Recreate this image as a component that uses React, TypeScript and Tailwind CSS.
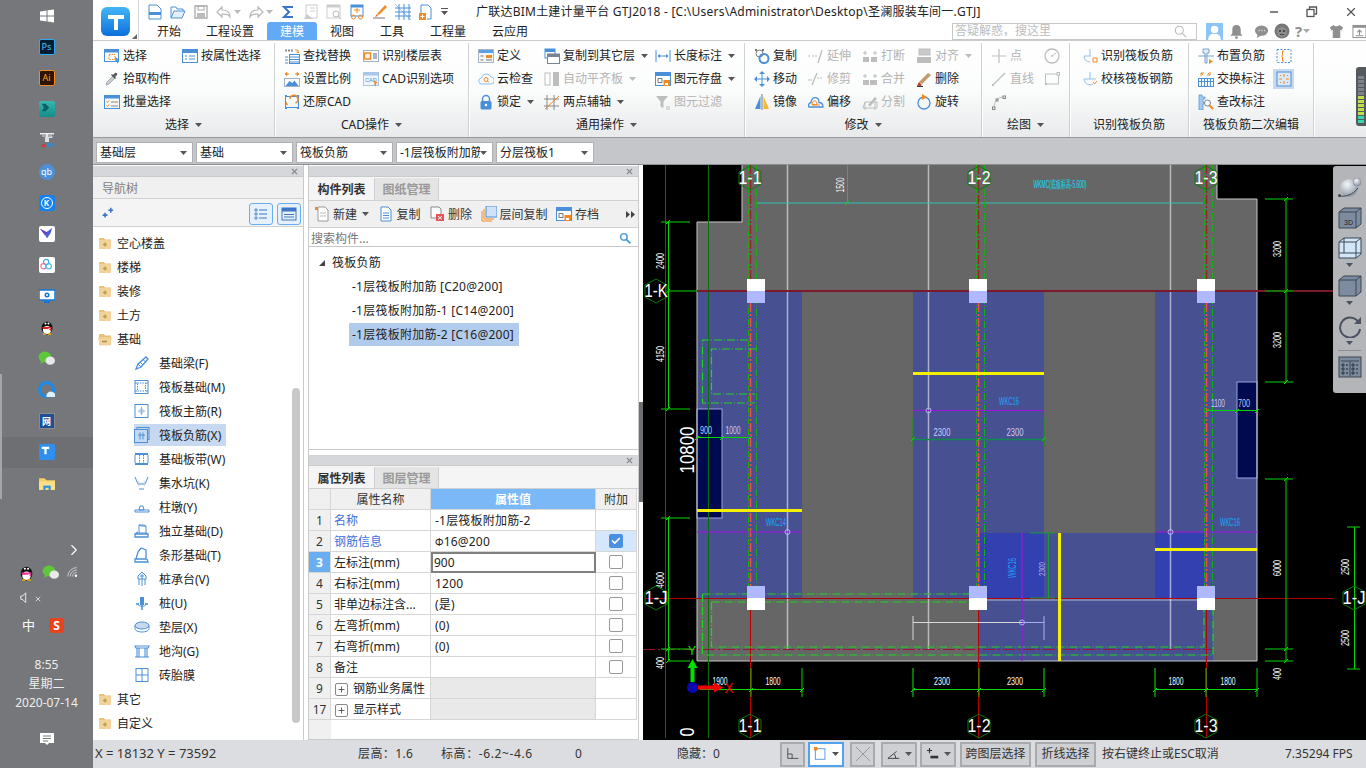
import type { ReactNode } from 'react';
import { X as CloseIcon, Check, ChevronRight, Minus, Plus } from 'lucide-react';

const B = '#4a90d9';
const O = '#f08a24';
const G = '#bdbdbd';

const Svg = ({ children, size = 16, box = 16 }: { children: ReactNode; size?: number; box?: number }) => (
  <svg width={size} height={size} viewBox={`0 0 ${box} ${box}`} fill="none" className="shrink-0">
    {children}
  </svg>
);

const Caret = ({ color = '#555' }: { color?: string }) => (
  <svg width="7" height="4" viewBox="0 0 7 4" className="shrink-0">
    <path d="M0 0h7L3.5 4z" fill={color} />
  </svg>
);

// ribbon icons
const icons: Record<string, ReactNode> = {
  select: (<><rect x=".5" y="1.5" width="14" height="12" stroke={B} /><rect x="1" y="2" width="13" height="2.5" fill={B} /><rect x="5" y="6.5" width="6" height="5" stroke={O} strokeDasharray="1.5 1" /><path d="M11 9l4.5 3-2 .5 1 2.5-1 .5-1-2.5-1 1z" fill={B} /></>),
  propSel: (<><rect x=".5" y="1.5" width="15" height="13" stroke={B} /><rect x="1" y="2" width="14" height="3" fill={B} /><path d="M3 8h2M3 11h2M7 8h6M7 11h6" stroke={B} /></>),
  picker: (<><path d="M2 14l1-3 6-6 2 2-6 6z" fill="#c8cdd2" stroke="#8b939b" strokeWidth=".7" /><path d="M9 4l2-2c1-1 3 1 2 2l-2 2 1 1-1 1-4-4 1-1z" fill="#50565c" /></>),
  batch: (<><rect x=".5" y="1.5" width="15" height="13" stroke={B} /><rect x="1" y="2" width="14" height="2.5" fill={B} /><path d="M2.5 7.5l1 1 1.5-2M2.5 11.5l1 1 1.5-2" stroke={O} /><path d="M7 8h7M7 12h7" stroke="#888" /></>),
  find: (<><path d="M1 2.5h2M4 2.5h2M7 2.5h2" stroke="#8a8a8a" strokeWidth="2" /><path d="M11 2h3v3M14 5l-1.5-1M14 5l1-1" stroke={O} /><rect x="5.5" y="6.5" width="10" height="9" stroke={B} /><path d="M6 9h9M6 11.5h9M6 14h9M1 9h3M1 12h3M1 15h3" stroke={B} /></>),
  floor: (<><rect x=".5" y="2.5" width="15" height="11" stroke="#9fb3c8" /><rect x="1.5" y="5" width="6" height="6" fill="#f4f4f4" stroke={O} strokeWidth="1.5" /><path d="M10 6h4M10 8h4M10 10h4" stroke="#4d6f96" /></>),
  scale: (<><path d="M2 3h3M1 3l2-1.5v3zM14 3h-3M15 3l-2-1.5v3z" fill={O} stroke={O} /><rect x=".5" y="7.5" width="15" height="8" stroke="#9fb3c8" /><path d="M1.5 15l4-5 3 2 2-2.5 4 5.500z" fill={B} /></>),
  cadOpt: (<><rect x=".5" y="1.5" width="15" height="13" stroke="#a8c7e8" fill="#eef5fc" /><rect x="1" y="2" width="14" height="2.5" fill="#a8c7e8" /><text x="2" y="11" fontSize="5.500" fill={B} fontFamily="Liberation Sans">CAD</text><path d="M11 9l4 3-2 .5v3l-1.500-1z" fill={O} /></>),
  restore: (<><rect x="1.500" y="2.500" width="13" height="11" stroke={B} /><path d="M1 1h2v2H1zM13 1h2v2h-2zM1 13h2v2H1zM13 13h2v2h-2z" fill={B} /><path d="M11.500 9a4 4 0 1 0-5.500-4" stroke={O} strokeWidth="1.500" /><path d="M4 11l2 2.500 2-2.500z" fill={O} transform="rotate(60 6 8)" /></>),
  define: (<><rect x=".5" y="1.500" width="15" height="13" stroke="#a7b5c4" fill="#f5f6f7" /><rect x="1" y="2" width="14" height="3" fill="#5b9fe6" /><rect x="8" y="7" width="6" height="3" fill={O} /><path d="M2.500 8h3M2.500 12h3M8 12h6" stroke="#777" /></>),
  cloud: (<><path d="M4 13a3 3 0 0 1-.500-6 5 5 0 0 1 9.500-1 3.500 3.500 0 0 1-.500 7z" stroke="#8cc0ee" /><circle cx="8" cy="8.500" r="2" stroke={O} /><path d="M9.500 10l1.500 1.500" stroke={O} /></>),
  lock: (<><path d="M4.500 7V5a3.500 3.500 0 0 1 7 0v2" stroke={B} strokeWidth="1.500" /><rect x="2.500" y="7" width="11" height="8.500" rx="1.500" fill={B} /><circle cx="8" cy="11" r="1.200" fill="#fff" /></>),
  copyLayer: (<><rect x="1" y="1" width="10" height="9" stroke={B} /><rect x="1" y="1" width="10" height="3" fill={B} /><rect x="3.500" y="6" width="12" height="9.500" fill="#fff" stroke="#7a8490" /><rect x="3.500" y="6" width="12" height="3" fill="#7a8490" /></>),
  autoAlign: (<><rect x="1" y="2" width="5" height="12" stroke={G} /><rect x="9" y="1" width="6" height="14" fill={G} /></>),
  twoPoint: (<><path d="M3 1v15M10 1v15M0 5h15M0 12h15" stroke="#8a8a8a" /><path d="M1 15L15 2" stroke={O} /></>),
  length: (<><path d="M1 2v12M15 2v12M3 8h10" stroke={B} /><path d="M2.500 8L5 6v4zM13.500 8L11 6v4z" fill={B} /></>),
  save: (<><rect x=".5" y="1.500" width="15" height="13" stroke={B} fill="#fff" /><rect x="1" y="2" width="14" height="3" fill={B} /><path d="M3 7.500h4v4H3z" stroke="#777" /><rect x="8.500" y="9" width="6.500" height="6" fill={O} /><rect x="10" y="12" width="3" height="2" fill="#fff" /></>),
  filter: (<><path d="M1 2h12L8.500 7.500V14l-3-1.500v-5z" fill={G} /><path d="M11 13h4M11 15h4" stroke={G} /></>),
  copy: (<><rect x="1" y="1" width="2" height="2" fill="#777" /><rect x="8" y="1" width="2" height="2" fill="#777" /><circle cx="5.500" cy="5.500" r="3.500" stroke="#777" /><circle cx="10" cy="10.500" r="4.500" stroke={B} strokeWidth="2" /></>),
  extend: (<><path d="M0 8h2M4 8h2M7 8h2" stroke={G} /><path d="M10 15l4-13" stroke={G} strokeWidth="1.300" /></>),
  move: (<><path d="M8 2v12M2 8h12" stroke={B} /><path d="M8 0l3 3H5zM8 16l3-3H5zM0 8l3-3v6zM16 8l-3-3v6z" fill={B} /></>),
  trim: (<><path d="M0 9h4M9 7h2M12 7h2" stroke={G} /><path d="M4 14L9 2" stroke={G} strokeWidth="1.300" /></>),
  mirror: (<><path d="M6.500 2L1 15h5.500z" fill={B} /><path d="M8 0v16" stroke="#777" /><path d="M9.500 2L15 15H9.500z" fill="#f5b82e" /></>),
  offset: (<><path d="M1 13a3 3 0 0 1 2-4.500C3 2 11 2 11 8.500c2 0 4 1.500 4 4.500z" stroke={B} strokeWidth="1.300" /><path d="M4 10.500c0-5 5-5 5 0z M4 11h8" stroke={O} /></>),
  breakI: (<><rect x="1" y="9" width="6" height="5" fill={G} /><rect x="9" y="9" width="6" height="5" fill={G} /><path d="M3 3v4M1 5h4M13 3v4M11 5h4" stroke={G} /></>),
  merge: (<><rect x="1" y="9" width="6" height="5" fill={G} /><rect x="8" y="9" width="7" height="5" fill={G} /><path d="M3 3v4M1 5h4M13 3v4M11 5h4" stroke={G} /></>),
  split: (<><path d="M1 14h14V8L3 8zM3 8v8M13 8v8" stroke={G} /><path d="M6 11l7-8 2 1.500-7 8z" fill={G} /></>),
  align: (<><rect x="3" y="1" width="11" height="6" fill="#c9c9c9" stroke={G} /><rect x="1" y="9" width="14" height="6" fill={G} /></>),
  erase: (<><path d="M3 11l9-9 3 2-9 9z" fill="#c49a6c" /><path d="M3 11l3 3-2 1.500-3-1z" fill="#c1441e" /><path d="M1 15.500h6" stroke="#333" /></>),
  rotate: (<><circle cx="8" cy="9" r="6" stroke={B} strokeWidth="1.300" /><path d="M6 0l5 3-5 3z" fill={O} /></>),
  point: (<path d="M8 1v14M1 8h14" stroke={G} strokeWidth="1.200" />),
  circle: (<><circle cx="8" cy="8" r="7" stroke={G} strokeWidth="1.300" /><circle cx="8" cy="8" r="1" fill={G} /><path d="M8 8l4-3" stroke={G} /></>),
  line: (<><path d="M2 14L14 2" stroke={G} strokeWidth="1.200" /><rect x="1" y="13" width="2" height="2" fill={G} /></>),
  rect: (<><rect x="1.500" y="3" width="13" height="10" stroke={G} /><rect x="13" y="1.500" width="2.500" height="2.500" fill="#fff" stroke={G} /><rect x="1" y="12" width="2" height="2" fill={G} /></>),
  arc: (<><path d="M3 14C3 7 7 3 13 3" stroke={G} /><rect x="1.500" y="13" width="2.500" height="2.500" stroke="#888" /><rect x="12" y="2" width="2.500" height="2.500" stroke="#888" /><rect x="5" y="5" width="2" height="2" stroke="#888" /></>),
  recog: (<><path d="M8 1v7M2 8h7" stroke="#93bfe8" /><path d="M2 8a6 6 0 0 0 6 6" stroke="#93bfe8" /><path d="M11 10h4v4h-4z" stroke={O} /></>),
  check: (<><path d="M8 1v7M2 8h12" stroke="#93bfe8" /><path d="M2 8a6 6 0 0 0 9 5" stroke="#93bfe8" /><path d="M11 11l1.500 2 2.500-3" stroke={O} /></>),
  place: (<><path d="M5 1h6v4H9v10H7V5H5z" stroke="#7aa3cf" fill="#e6eff8" /><path d="M0 8h16" stroke="#7aa3cf" /><path d="M11 11l4 2.500-4 2.500z" fill={O} /></>),
  swap: (<><path d="M3 5V2h3M3 2l2 2M12 1v3H9M12 4l-2-2" stroke={O} /><rect x=".5" y="7.500" width="15" height="8" stroke={B} /><path d="M1 10.500h14M3.500 8v7M6.500 8v7M9.500 8v7M12.500 8v7" stroke={B} /></>),
  audit: (<><path d="M1 1h3v2h3v2H5v3h1v2H5v6H1z" fill="#a9c9ea" stroke={B} strokeWidth=".7" /><circle cx="9.500" cy="9" r="3" stroke="#7a8490" fill="#fff" /><path d="M11 11l4 4" stroke={O} strokeWidth="2" /></>),
  bracket: (<><rect x="1" y="1.500" width="14" height="13" stroke={B} strokeDasharray="2 1.500" /><path d="M8 3H6.500v4L5.500 8l1 1v4H8" stroke={O} /></>),
  target: (<><rect x="1" y="1" width="14" height="14" fill="#dbe8f6" stroke={B} /><path d="M8 3v3M8 10v3M3 8h3M10 8h3" stroke={O} /><path d="M4 4l1 1M12 4l-1 1M4 12l1-1M12 12l-1-1" stroke={O} /></>),
};

const Ic = ({ name }: { name: string }) => <Svg>{icons[name]}</Svg>;

type ItemDef = { icon: string; label?: string; caret?: boolean; off?: boolean };

const RibbonItem = ({ icon, label, caret, off }: ItemDef) => (
  <div className={`flex h-[23px] shrink-0 items-center gap-[3px] whitespace-nowrap text-[12px] ${off ? 'text-[#b4b4b4]' : 'text-[#222]'}`}>
    <Ic name={icon} />
    {label && <span>{label}</span>}
    {caret && <span className="ml-[3px]"><Caret color={off ? '#bbb' : '#555'} /></span>}
  </div>
);

const Group = ({
  w, pl, cols, label, caret = true,
}: { w: string; pl: string; cols: { w: string; items: ItemDef[] }[]; label: string; caret?: boolean }) => (
  <div className={`flex ${w} shrink-0 flex-col border-r border-[#cfd1d3] shadow-[1px_0_0_#fff]`}>
    <div className={`flex h-[70px] pt-px ${pl}`}>
      {cols.map((c, i) => (
        <div key={i} className={`flex ${c.w} shrink-0 flex-col`}>
          {c.items.map((it, j) => <RibbonItem key={j} {...it} />)}
        </div>
      ))}
    </div>
    <div className="flex h-[24px] items-center justify-center gap-[6px] text-[12px] text-[#222]">
      {label}
      {caret && <Caret />}
    </div>
  </div>
);

const groups = [
  { w: 'w-[182px]', pl: 'pl-[11px]', label: '选择', cols: [
    { w: 'w-[78px]', items: [{ icon: 'select', label: '选择' }, { icon: 'picker', label: '拾取构件' }, { icon: 'batch', label: '批量选择' }] },
    { w: 'w-[90px]', items: [{ icon: 'propSel', label: '按属性选择' }] },
  ] },
  { w: 'w-[194px]', pl: 'pl-[9px]', label: 'CAD操作', cols: [
    { w: 'w-[79px]', items: [{ icon: 'find', label: '查找替换' }, { icon: 'scale', label: '设置比例' }, { icon: 'restore', label: '还原CAD' }] },
    { w: 'w-[90px]', items: [{ icon: 'floor', label: '识别楼层表' }, { icon: 'cadOpt', label: 'CAD识别选项' }] },
  ] },
  { w: 'w-[276px]', pl: 'pl-[9px]', label: '通用操作', cols: [
    { w: 'w-[66px]', items: [{ icon: 'define', label: '定义' }, { icon: 'cloud', label: '云检查' }, { icon: 'lock', label: '锁定', caret: true }] },
    { w: 'w-[111px]', items: [{ icon: 'copyLayer', label: '复制到其它层', caret: true }, { icon: 'autoAlign', label: '自动平齐板', caret: true, off: true }, { icon: 'twoPoint', label: '两点辅轴', caret: true }] },
    { w: 'w-[85px]', items: [{ icon: 'length', label: '长度标注', caret: true }, { icon: 'save', label: '图元存盘', caret: true }, { icon: 'filter', label: '图元过滤', off: true }] },
  ] },
  { w: 'w-[237px]', pl: 'pl-[9px]', label: '修改', cols: [
    { w: 'w-[54px]', items: [{ icon: 'copy', label: '复制' }, { icon: 'move', label: '移动' }, { icon: 'mirror', label: '镜像' }] },
    { w: 'w-[54px]', items: [{ icon: 'extend', label: '延伸', off: true }, { icon: 'trim', label: '修剪', off: true }, { icon: 'offset', label: '偏移' }] },
    { w: 'w-[54px]', items: [{ icon: 'breakI', label: '打断', off: true }, { icon: 'merge', label: '合并', off: true }, { icon: 'split', label: '分割', off: true }] },
    { w: 'w-[60px]', items: [{ icon: 'align', label: '对齐', caret: true, off: true }, { icon: 'erase', label: '删除' }, { icon: 'rotate', label: '旋转' }] },
  ] },
  { w: 'w-[88px]', pl: 'pl-[9px]', label: '绘图', cols: [
    { w: 'w-[53px]', items: [{ icon: 'point', label: '点', off: true }, { icon: 'line', label: '直线', off: true }, { icon: 'arc' }] },
    { w: 'w-[20px]', items: [{ icon: 'circle' }, { icon: 'rect' }] },
  ] },
  { w: 'w-[119px]', pl: 'pl-[12px]', label: '识别筏板负筋', caret: false, cols: [
    { w: 'w-[100px]', items: [{ icon: 'recog', label: '识别筏板负筋' }, { icon: 'check', label: '校核筏板钢筋' }] },
  ] },
];

const HeaderTab = ({ label, active, w, pr = '' }: { label: string; active?: boolean; w: string; pr?: string }) => (
  <div className={`flex ${w} ${pr} h-[18px] items-center justify-center pt-[2px] text-[12px] ${active ? 'rounded-t-[3px] bg-[#62a9f6] text-white' : 'text-[#222]'}`}>
    {label}
  </div>
);

const QuickIcons = () => (
  <div className="flex items-center gap-[7px]">
    <Svg><path d="M2 1h8l4 4v10H2z" stroke={B} /><rect x="2" y="8" width="12" height="3" fill={B} /></Svg>
    <Svg><path d="M1 14V3h5l1 2h6v2" stroke={B} /><path d="M1 14l3-7h11l-3 7z" stroke={B} fill="#e4f0fb" /></Svg>
    <Svg><path d="M2 2h12v12H2z" stroke="#aaa" strokeWidth="1.300" /><rect x="5" y="2" width="6" height="4" stroke="#aaa" /><rect x="4" y="9" width="8" height="5" fill="#bbb" /></Svg>
    <span className="flex items-center gap-[2px]">
      <Svg><path d="M6 3L1 8l5 5v-3c4 0 6 0 8 3 0-5-3-7-8-7z" stroke="#b7b7b7" strokeWidth="1.200" /></Svg>
      <Caret color="#bbb" />
    </span>
    <span className="flex items-center gap-[2px]">
      <Svg><path d="M10 3l5 5-5 5v-3c-4 0-6 0-8 3 0-5 3-7 8-7z" stroke="#b7b7b7" strokeWidth="1.200" /></Svg>
      <Caret color="#bbb" />
    </span>
    <Svg><path d="M13 3H4l5 5-5 5h9" stroke="#3c76c4" strokeWidth="2" /></Svg>
    <Svg><rect x="3" y="1" width="11" height="13" stroke="#ccc" /><path d="M7 4h5M7 7h5" stroke="#ccc" /><path d="M1 15l3-5 6 5z" fill="#ccc" /></Svg>
    <Svg><rect x="1" y="1" width="13" height="13" stroke="#ccc" /><rect x="1" y="1" width="13" height="2.500" fill="#ccc" /><circle cx="10" cy="10" r="3" stroke="#bbb" /><path d="M12 12l3 3" stroke="#bbb" /></Svg>
    <Svg><rect x="2" y="1" width="12" height="11" stroke={B} /><rect x="2" y="1" width="12" height="2.500" fill={B} /><path d="M5 6h6M8 4v5" stroke={O} /><circle cx="4.500" cy="13" r="2" stroke={O} /><circle cx="11.500" cy="13" r="2" stroke={O} /></Svg>
    <Svg><path d="M5 10l8-9 2 2-8 8z" fill={O} /><path d="M1 14h12" stroke="#777" /><path d="M5 10l-2 3 3-1z" fill="#d96a12" /></Svg>
    <Svg><path d="M0 4h16M0 8h16M0 12h16M4 0v16M9 0v16M14 0v16" stroke={B} /><path d="M0 0l16 16" stroke={B} strokeWidth=".5" /></Svg>
    <Svg><path d="M3 9V1h7l3 3v11H9" stroke={B} /><rect x="1" y="9" width="7" height="7" fill={O} /><path d="M4.500 10.500v4M2.500 12.500h4" stroke="#fff" /></Svg>
    <span className="flex flex-col items-center gap-[2px]">
      <span className="h-px w-[7px] bg-[#555]" />
      <Caret />
    </span>
  </div>
);

const Header = () => (
  <div className="flex h-[41px] border-b border-[#c9cbcd] bg-white">
    <div className="relative flex w-[46px] shrink-0 justify-center border-r border-[#d4d4d4] pt-[7px]">
      <div className="flex h-[29px] w-[29px] items-center justify-center rounded-[6px] bg-gradient-to-b from-[#45b4f5] to-[#0b70dd]">
        <Svg size={22} box={22}><path d="M3 4h16v4h-6v11H9V8H3z" fill="#fff" /></Svg>
      </div>
      <span className="absolute bottom-[1px] right-[1px] h-0 w-0 border-b-[5px] border-l-[5px] border-b-[#666] border-l-transparent" />
    </div>
    <div className="flex flex-1 flex-col">
      <div className="flex h-[22px] items-center pl-[8px] pt-[1px]">
        <div className="w-[329px]"><QuickIcons /></div>
        <span className="w-[508px] whitespace-nowrap text-[12px] tracking-[0.23px] text-[#222]">广联达BIM土建计量平台 GTJ2018 - [C:\Users\Administrator\Desktop\圣澜服装车间一.GTJ]</span>
        <div className="ml-[284px] flex items-center gap-[26px] text-[#555]">
          <Minus size={12} strokeWidth={3} />
          <Svg size={12} box={12}><rect x="1" y="3.500" width="7" height="7" stroke="#555" strokeWidth="1.300" /><path d="M3.500 3V1h7v7h-2" stroke="#555" strokeWidth="1.300" /></Svg>
          <CloseIcon size={14} />
        </div>
      </div>
      <div className="flex items-center pl-[1px]">
        <HeaderTab label="开始" w="w-[58px]" />
        <HeaderTab label="工程设置" w="w-[69px]" pr="pr-[5px]" />
        <HeaderTab label="建模" active w="w-[50px]" />
        <HeaderTab label="视图" w="w-[50px]" />
        <HeaderTab label="工具" w="w-[50px]" />
        <HeaderTab label="工程量" w="w-[62px]" />
        <HeaderTab label="云应用" w="w-[62px]" />
        <div className="ml-[411px] flex h-[17px] w-[245px] items-center justify-between border border-[#c8c8c8] pl-[2px] pr-[9px] text-[12px] text-[#bdbdbd]">
          答疑解惑，搜这里
          <Svg size={13}><circle cx="6.500" cy="6.500" r="5" stroke="#bbb" strokeWidth="1.300" /><path d="M10 10l5 5" stroke="#bbb" strokeWidth="1.500" /></Svg>
        </div>
        <div className="ml-[9px] flex items-center">
          <Svg size={17}><rect width="16" height="16" fill="#8cc4f5" /><circle cx="8" cy="6" r="3.500" fill="#fff" /><path d="M2 16c0-5 3-6 6-6s6 1 6 6z" fill="#fff" /></Svg>
          <span className="ml-[6px]"><Svg size={15}><path d="M8 1c3 0 4.500 2 4.500 5v4l2 2.500h-13l2-2.500V6C3.500 3 5 1 8 1z" fill="#8f8f8f" /><circle cx="8" cy="14.500" r="1.500" fill="#8f8f8f" /></Svg></span>
          <span className="ml-[10px]"><Svg size={15}><ellipse cx="8" cy="7" rx="7" ry="5.500" fill="#8f8f8f" /><path d="M4 11l-1 4 5-3z" fill="#8f8f8f" /><path d="M5 7h.8M8 7h.8M11 7h.8" stroke="#fff" strokeWidth="1.500" /></Svg></span>
          <span className="ml-[5px]"><Svg size={16}><circle cx="8" cy="8" r="7.500" fill="#777" /><circle cx="8" cy="9" r="5" fill="#8d8d8d" /><circle cx="6" cy="8" r="1" fill="#333" /><circle cx="10" cy="8" r="1" fill="#333" /><path d="M6 11.500h4" stroke="#444" /></Svg></span>
          <span className="ml-[5px] text-[15px] font-bold leading-none text-[#8f8f8f]">?</span>
          <span className="ml-[1px]"><Caret color="#aaa" /></span>
          <span className="ml-[19px]"><Svg size={15}><path d="M5 1L1 3.500l1.500 3.500L4 6v9h8V6l1.500 1L15 3.500 11 1c-1 2-5 2-6 0z" fill="#8f8f8f" /></Svg></span>
          <span className="ml-[8px]"><Svg size={15}><rect x="1" y="1.500" width="14" height="13" stroke="#8f8f8f" /><rect x="1" y="1.500" width="14" height="2.500" fill="#8f8f8f" /><path d="M8 12V7M5.500 9L8 6.500 10.500 9" stroke="#8f8f8f" strokeWidth="1.200" /><path d="M4 12.500h8" stroke="#8f8f8f" /></Svg></span>
        </div>
      </div>
    </div>
  </div>
);

const Ribbon = () => (
  <div className="flex h-[97px] border-b border-[#98999b] bg-gradient-to-b from-white via-[#fbfcfc] to-[#e8eaeb] pt-[2px]">
    {groups.map((g) => <Group key={g.label} {...g} />)}
    <div className="flex w-[125px] shrink-0 flex-col border-r border-[#cfd1d3] shadow-[1px_0_0_#fff]">
      <div className="flex h-[70px] pl-[9px] pt-px">
        <div className="flex w-[75px] shrink-0 flex-col">
          <RibbonItem icon="place" label="布置负筋" />
          <RibbonItem icon="swap" label="交换标注" />
          <RibbonItem icon="audit" label="查改标注" />
        </div>
        <div className="flex flex-col">
          <div className="flex h-[23px] w-[21px] items-center justify-center"><Ic name="bracket" /></div>
          <div className="mt-[2px] flex h-[20px] w-[21px] items-center justify-center bg-[#c8d9ee]"><Ic name="target" /></div>
        </div>
      </div>
      <div className="flex h-[24px] items-center justify-center text-[12px] text-[#222]">筏板负筋二次编辑</div>
    </div>
    <div className="flex flex-1 justify-end pt-[24px]">
      <div className="flex h-[59px] w-[10px] flex-col-reverse gap-[1px] rounded-l-[3px] bg-[#555a5e] px-[2px] py-[3px]">
        {[0, 1, 2, 3, 4, 5, 6, 7, 8, 9, 10, 11].map((i) => (
          <span key={i} className={`h-[3px] ${i < 2 ? 'bg-[#39d6b0]' : i < 7 ? 'bg-[#bde04a]' : 'bg-[#7d8388]'}`} />
        ))}
      </div>
    </div>
  </div>
);

const SelectorBox = ({ label, w = 'w-[97px]' }: { label: string; w?: string }) => (
  <div className={`flex h-[21px] ${w} items-center justify-between border border-[#b0b1b3] bg-white pl-[3px] pr-[5px] text-[12px] text-[#222]`}>
    <span className="overflow-hidden whitespace-nowrap">{label}</span>
    <Caret />
  </div>
);

const SelectorBar = () => (
  <div className="flex h-[27px] items-start gap-[3px] border-b border-[#8d8e90] bg-[#c4c6c9] pl-[3px] pt-[4px]">
    <SelectorBox label="基础层" />
    <SelectorBox label="基础" />
    <SelectorBox label="筏板负筋" />
    <SelectorBox label="-1层筏板附加筋" />
    <SelectorBox label="分层筏板1" w="w-[98px]" />
  </div>
);

const PanelBar = () => (
  <div className="flex h-[11px] items-center justify-end border-b border-[#c9cacc] bg-[#d6d7da] pr-[4px]">
    <CloseIcon size={9} strokeWidth={3} className="text-[#888]" />
  </div>
);

const Folder = ({ open }: { open?: boolean }) => (
  <Svg size={16}>
    <path d="M2 3h5l1 1.500h6V14H2z" fill="#e9c27a" />
    {open
      ? <><path d="M1 6.500h11l3 0-2 8H3z" fill="#f0d49b" /><path d="M5 10.500h5" stroke="#b08c44" strokeWidth="1.500" /></>
      : <><rect x="2" y="5" width="12" height="9" fill="#f0d49b" /><path d="M6 9.500h4M8 7.500v4" stroke="#c59a48" strokeWidth="1.500" /></>}
  </Svg>
);

const navIcons: Record<string, ReactNode> = {
  beam: (<><path d="M2 14l2-5 8-7 2 2-7 8z" stroke={B} strokeWidth="1.300" /><path d="M4 9l3 3M6 7l3 3M9 4.500l3 3" stroke={B} /></>),
  raft: (<><rect x="1" y="1.500" width="13" height="13" stroke={B} /><rect x="3.500" y="4" width="8" height="8" stroke={B} strokeDasharray="1.500 1" /><path d="M1 4h2M12 4h2M1 12h2M12 12h2" stroke={B} /></>),
  main: (<><rect x="1" y="1.500" width="13" height="13" stroke={B} /><path d="M7.500 4v8M4 8h7" stroke="#8fb2d8" /><path d="M6 6h3v4H6z" stroke="#8fb2d8" strokeWidth=".6" /></>),
  neg: (<><rect x="3" y="0.500" width="12" height="12" stroke={B} /><rect x=".5" y="2.500" width="13" height="13" fill="#c7d9f0" stroke={B} /><path d="M4 8h7M6 5.500v7M9 5.500v7" stroke={B} /></>),
  strip: (<><rect x="1" y="2" width="13" height="2" fill={B} /><rect x="1" y="12" width="13" height="2" fill={B} /><path d="M5.500 4v8M9.500 4v8" stroke={B} strokeDasharray="1.500 1" /><path d="M1 4v8M14 4v8" stroke={B} /></>),
  pit: (<><path d="M1 2l3 7h7l3-7M5 14h5" stroke={B} /><path d="M4 6l7 5" stroke={G} strokeDasharray="1 1" /><path d="M11 6l-7 5" stroke={G} strokeDasharray="1 1" /></>),
  pier: (<><path d="M1 11h14v2H1zM5 11l1-4h3l1 4z" stroke={B} fill="#fff" /></>),
  pad: (<><path d="M5 2h5l2 1v7H5zM5 2l2 1h5" stroke={B} /><path d="M1 11h13v3H1z M1 11l3-2M14 11l-2-1" stroke={B} strokeWidth="1.300" /></>),
  stripF: (<><path d="M7 1l5 2v9H1v3h13l-1-3M2 12l2-7 3-4" stroke={B} strokeWidth="1.300" /></>),
  cap: (<><path d="M8 1l4 4v3H4V5zM5 8v6M8 8v7M11 8v6" stroke={B} /><path d="M6 5h4M8 3v5" stroke={B} /></>),
  pile: (<><path d="M6 2h4v8H6z" fill={B} /><path d="M2 9h3M11 9h3M8 10v5" stroke={B} strokeWidth="1.500" /><path d="M4 9c0 3 8 3 8 0" stroke={B} /></>),
  cushion: (<><ellipse cx="8" cy="6.500" rx="7" ry="3.500" fill="#c7d9f0" stroke={B} /><path d="M1 6.500v3c0 2 3 3.500 7 3.500s7-1.500 7-3.500v-3" stroke={B} /></>),
  ditch: (<><path d="M1 3h14l-1 2H2zM3 5v9M13 5v9M1 14h14M5 5v9M11 5v9" stroke={B} strokeWidth="1.100" /></>),
  brick: (<><rect x="2" y="1.500" width="12" height="13" stroke={B} /><path d="M8 1.500v13M2 8h12" stroke={B} /></>),
};

const treeChildren = [
  { i: 'beam', t: '基础梁(F)' }, { i: 'raft', t: '筏板基础(M)' }, { i: 'main', t: '筏板主筋(R)' },
  { i: 'neg', t: '筏板负筋(X)', sel: true }, { i: 'strip', t: '基础板带(W)' }, { i: 'pit', t: '集水坑(K)' },
  { i: 'pier', t: '柱墩(Y)' }, { i: 'pad', t: '独立基础(D)' }, { i: 'stripF', t: '条形基础(T)' },
  { i: 'cap', t: '桩承台(V)' }, { i: 'pile', t: '桩(U)' }, { i: 'cushion', t: '垫层(X)' },
  { i: 'ditch', t: '地沟(G)' }, { i: 'brick', t: '砖胎膜' },
];

const TreeFolder = ({ t, open }: { t: string; open?: boolean }) => (
  <div className="flex h-[24px] items-center pl-[4px] text-[12px] text-[#222]">
    <Folder open={open} />
    <span className="ml-[4px] pt-[2px]">{t}</span>
  </div>
);

const NavPanel = () => (
  <div className="relative flex w-[211px] shrink-0 flex-col border-r border-[#c9cacc] bg-white">
    <div className="pt-[1px]"><PanelBar /></div>
    <div className="flex h-[22px] items-center border-b border-[#cfd0d2] bg-[#f0f0f0] pl-[9px] pt-[2px] text-[12px] text-[#7f7f7f]">导航树</div>
    <div className="flex h-[28px] items-center justify-between border-b border-[#cfd0d2] bg-[#f4f4f4] pl-[8px] pr-[2px] pt-[2px]">
      <Svg size={13}><path d="M2 10h6M5 7v6M9 4h6M12 1v6" stroke="#3c76c4" strokeWidth="2" /></Svg>
      <div className="flex gap-[4px]">
        <div className="flex h-[22px] w-[24px] items-center justify-center rounded-[3px] border border-[#66aef0] bg-[#e6f1fc]">
          <Svg><path d="M2 3h2v2H2zM2 7h2v2H2zM2 11h2v2H2z" stroke="#3c76c4" strokeWidth=".8" /><path d="M6 4h8M6 8h8M6 12h8" stroke="#3c76c4" /></Svg>
        </div>
        <div className="flex h-[22px] w-[24px] items-center justify-center rounded-[3px] border border-[#66aef0] bg-[#e6f1fc]">
          <Svg><rect x="1" y="2" width="14" height="12" stroke="#3c76c4" /><rect x="1" y="2" width="14" height="3.500" fill="#3c76c4" /><path d="M3 8.500h10M3 11h10" stroke="#3c76c4" /></Svg>
        </div>
      </div>
    </div>
    <div className="pt-[4px]">
      <TreeFolder t="空心楼盖" />
      <TreeFolder t="楼梯" />
      <TreeFolder t="装修" />
      <TreeFolder t="土方" />
      <TreeFolder t="基础" open />
      {treeChildren.map((c) => (
        <div key={c.t} className="flex h-[24px] items-center pl-[41px]">
          <div className={`flex h-[22px] items-center pr-[5px] text-[12px] text-[#222] ${c.sel ? 'bg-[#c7d9f0]' : ''}`}>
            <Svg size={16}>{navIcons[c.i]}</Svg>
            <span className="ml-[9px] pt-[2px]">{c.t}</span>
          </div>
        </div>
      ))}
      <TreeFolder t="其它" />
      <TreeFolder t="自定义" />
    </div>
    <div className="absolute left-[199px] top-[223px] h-[335px] w-[8px] rounded-full bg-[#c8c8c8]" />
  </div>
);

const ToolBtn = ({ icon, label, caret }: { icon: ReactNode; label: string; caret?: boolean }) => (
  <div className="flex items-center gap-[3px] whitespace-nowrap text-[12px] text-[#333]">
    <Svg>{icon}</Svg>
    <span className="pt-[2px]">{label}</span>
    {caret && <span className="ml-[2px]"><Caret /></span>}
  </div>
);

const PanelTabs = ({ a, b, h }: { a: string; b: string; h: string }) => (
  <div className={`flex ${h} border-b border-[#cfd0d2] bg-[#f5f5f5] pt-px text-[12px]`}>
    <div className="flex w-[65px] items-center justify-center pt-[2px] font-bold text-[#333]">{a}</div>
    <div className="flex w-[65px] items-center justify-center border-x border-[#cfd0d2] bg-[#e4e4e4] pt-[2px] font-bold text-[#999]">{b}</div>
  </div>
);

const ListPanel = () => (
  <div className="flex h-[285px] flex-col border-x border-b border-[#c9cacc] bg-white">
    <div className="pt-px"><PanelBar /></div>
    <PanelTabs a="构件列表" b="图纸管理" h="h-[24px]" />
    <div className="flex h-[27px] items-center border-b border-[#cfd0d2] bg-[#f0f0f0] pl-[5px] pr-[3px]">
      <div className="flex items-center gap-[8.5px]">
        <ToolBtn label="新建" caret icon={<><path d="M4 1h7l3 3v11H4z" stroke="#9a9a9a" fill="#fff" /><path d="M1 1h3v3H1z" fill={O} /><path d="M6 7h6M6 10h6" stroke="#bbb" /></>} />
        <ToolBtn label="复制" icon={<><path d="M3 1h7l3 3v11H3z" stroke={B} fill="#fff" /><path d="M5 7h6M5 9.500h6M5 12h6" stroke={B} /></>} />
        <ToolBtn label="删除" icon={<><path d="M2 1h8l2 2v9H2z" stroke="#888" fill="#fff" /><rect x="7" y="8" width="8" height="7" fill="#e05656" /><path d="M9 10l4 3.500M13 10l-4 3.500" stroke="#fff" /></>} />
        <ToolBtn label="层间复制" icon={<><path d="M1 5v10h10M3 3v10h10" stroke={O} /><rect x="5" y="0" width="11" height="11" fill="#cfe2f7" stroke={B} /></>} />
        <ToolBtn label="存档" icon={icons.save} />
      </div>
      <div className="ml-auto flex">
        <svg width="9" height="7" viewBox="0 0 9 7"><path d="M0 0l4 3.500L0 7zM5 0l4 3.500L5 7z" fill="#444" /></svg>
      </div>
    </div>
    <div className="flex h-[19px] items-center justify-between border-b border-[#c5c6c8] bg-white pl-[2px] pr-[6px] pt-[3px] text-[12px] text-[#777]">
      搜索构件...
      <Svg size={13}><circle cx="6" cy="6" r="4" stroke="#3f97d8" strokeWidth="1.800" /><path d="M9 9l5 5" stroke="#3f97d8" strokeWidth="2" /></Svg>
    </div>
    <div className="pt-[4px] text-[12px] tracking-[0.24px] text-[#222]">
      <div className="flex h-[24px] items-center pl-[10px]">
        <span className="h-0 w-0 border-b-[6px] border-l-[6px] border-b-[#444] border-l-transparent" />
        <span className="ml-[7px]">筏板负筋</span>
      </div>
      <div className="flex h-[24px] items-center pl-[43px]">-1层筏板附加筋 [C20@200]</div>
      <div className="flex h-[24px] items-center pl-[43px]">-1层筏板附加筋-1 [C14@200]</div>
      <div className="ml-[40px] flex h-[23px] w-[170px] items-center bg-[#b1cbed] pl-[3px]">-1层筏板附加筋-2 [C16@200]</div>
    </div>
  </div>
);

type Row = { n: string; name: string; val?: ReactNode; blue?: boolean; box?: 'on' | 'off'; group?: boolean; active?: boolean };

const rows: Row[] = [
  { n: '1', name: '名称', val: '-1层筏板附加筋-2', blue: true },
  { n: '2', name: '钢筋信息', val: <><span className="align-[2px] text-[10px]">Φ</span>16@200</>, blue: true, box: 'on' },
  { n: '3', name: '左标注(mm)', val: '900', box: 'off', active: true },
  { n: '4', name: '右标注(mm)', val: '1200', box: 'off' },
  { n: '5', name: '非单边标注含...', val: '(是)', box: 'off' },
  { n: '6', name: '左弯折(mm)', val: '(0)', box: 'off' },
  { n: '7', name: '右弯折(mm)', val: '(0)', box: 'off' },
  { n: '8', name: '备注', box: 'off' },
  { n: '9', name: '钢筋业务属性', group: true },
  { n: '17', name: '显示样式', group: true },
];

const cell = 'flex items-center border-r border-b border-[#d6d6d6] pt-[2px]';

const PropPanel = () => (
  <div className="flex flex-1 flex-col border-x border-b border-[#c9cacc] bg-white">
    <div className="pt-[5px]"><PanelBar /></div>
    <PanelTabs a="属性列表" b="图层管理" h="h-[23px]" />
    <div className="grid grid-cols-[22px_100px_165px_41px] auto-rows-[21px] text-[12px] text-[#333]">
      <div className={`${cell} bg-[#f0f0f0]`} />
      <div className={`${cell} justify-center bg-[#f0f0f0]`}>属性名称</div>
      <div className={`${cell} justify-center border-[#5b9fe6] bg-[#7ab8f7] font-bold text-white`}>属性值</div>
      <div className={`${cell} justify-center bg-[#f0f0f0]`}>附加</div>
      {rows.map((r) => (
        <div key={r.n} className="contents">
          <div className={`${cell} justify-center ${r.active ? 'bg-[#6aaef2] font-bold text-white' : 'bg-[#f0f0f0]'}`}>{r.n}</div>
          <div className={`${cell} pl-[3px] ${r.blue ? 'text-[#3d6fe0]' : 'text-[#222]'}`}>
            {r.group && (
              <span className="mr-[5px] ml-[1px] flex h-[13px] w-[13px] items-center justify-center rounded-[2px] border border-[#888]">
                <Plus size={9} strokeWidth={2} className="text-[#333]" />
              </span>
            )}
            {r.name}
          </div>
          {r.active ? (
            <div className="flex items-center border-2 border-[#808080] pl-[1px] text-[#222]">{r.val}</div>
          ) : (
            <div className={`${cell} pl-[4px] tracking-[0.2px] text-[#222] ${r.group ? 'bg-[#e9e9e9]' : ''}`}>{r.val}</div>
          )}
          <div className={`flex items-center justify-center border-r border-b border-[#d6d6d6] ${r.box === 'on' ? 'bg-[#d5e8fb]' : ''}`}>
            {r.box === 'on' && (
              <span className="flex h-[14px] w-[14px] items-center justify-center rounded-[2px] bg-[#4a90e2]">
                <Check size={10} strokeWidth={4} className="text-white" />
              </span>
            )}
            {r.box === 'off' && <span className="h-[14px] w-[14px] rounded-[2px] border border-[#999] bg-white" />}
          </div>
        </div>
      ))}
    </div>
    <div className="flex-1"><div className="h-full w-[22px] bg-[#f0f0f0]" /></div>
  </div>
);

// drawing helpers, coordinates are screen pixels
const Tx = ({ x, y, s, l, f = 10, c = '#fff', r }: { x: number; y: number; s: string; l: number; f?: number; c?: string; r?: boolean }) => (
  <text
    x={x}
    y={y}
    fontSize={f}
    fill={c}
    textAnchor="middle"
    textLength={l}
    lengthAdjust="spacingAndGlyphs"
    fontFamily="Liberation Sans"
    transform={r ? `rotate(-90 ${x} ${y})` : undefined}
  >
    {s}
  </text>
);

const Hex = ({ x, y, s }: { x: number; y: number; s: string }) => (
  <g>
    <polygon points={`${x},${y - 12} ${x + 11},${y - 6} ${x + 11},${y + 6} ${x},${y + 12} ${x - 11},${y + 6} ${x - 11},${y - 6}`} stroke="#0a7a0a" fill="none" />
    <Tx x={x} y={y + 6} s={s} l={23} f={18} />
  </g>
);

const Tick = ({ x, y, c = '#00e000' }: { x: number; y: number; c?: string }) => <path d={`M${x - 2} ${y + 2}l4 -4`} stroke={c} />;

const Column = ({ x, y, top }: { x: number; y: number; top?: boolean }) => (
  <g>
    <rect x={x} y={y} width="18" height="12" fill={top ? '#fff' : '#b0b8ff'} />
    <rect x={x} y={y + 12} width="18" height="12" fill={top ? '#b0b8ff' : '#fff'} />
  </g>
);

const AxisV = ({ x }: { x: number }) => (
  <g>
    <path d={`M${x} 165V279`} stroke="#a02028" strokeWidth="1.500" strokeDasharray="9 2 2 2" />
    <path d={`M${x} 303V586`} stroke="#ff4a4a" strokeWidth="1.500" strokeDasharray="9 2 2 2" />
    <path d={`M${x} 610V738`} stroke="#b80000" />
    <path d={`M${x - 2} 165V586`} stroke="#16b016" strokeDasharray="6 2 1 2" />
    <path d={`M${x + 6} 165V586`} stroke="#16b016" strokeDasharray="7 2 1 2" />
  </g>
);

const DrawingCanvas = () => (
  <svg viewBox="643 165 723 575" width="723" height="575" className="block">
    <rect x="643" y="165" width="723" height="575" fill="#000" />
    <path d="M697 222H742V165H1217V199H1257V661H697z" fill="#666" />
    <rect x="697" y="291" width="105" height="307" fill="#475091" />
    <rect x="913" y="291" width="131" height="307" fill="#475091" />
    <rect x="1155" y="291" width="102" height="307" fill="#475091" />
    <rect x="1044" y="533" width="111" height="128" fill="#475091" />
    <rect x="979" y="598" width="234" height="63" fill="#475091" />
    <rect x="980" y="533" width="64" height="65" fill="#3340b0" />
    <rect x="1155" y="533" width="49" height="65" fill="#3340b0" />
    <rect x="697" y="409" width="25" height="109" fill="#000a4f" stroke="#9aa0dd" />
    <rect x="1237" y="382" width="20" height="96" fill="#000a4f" stroke="#9aa0dd" />
    <path d="M697 222H742V165M1217 165V199H1257V661H697V222" fill="none" stroke="#c8c8c8" />
    {/* grid lines */}
    <path d="M665.500 165V738M708.500 165V738" stroke="#0b6b0b" />
    <path d="M787.500 165V650M928.500 165V650M1170.500 165V650" stroke="#fff" strokeOpacity=".55" strokeWidth="1.500" />
    <path d="M756 203H1203" stroke="#2cc4b4" />
    <path d="M697 291H1333" stroke="#7a1a2a" strokeWidth="2" />
    <path d="M645 598.500H1333" stroke="#b00000" />
    <path d="M643 649.500H1213" stroke="#a01030" strokeDasharray="12 3 2 3" />
    <path d="M980 600H1197" stroke="#fff" strokeOpacity=".6" />
    <AxisV x={750.500} />
    <AxisV x={978.500} />
    <AxisV x={1206.500} />
    {/* rebar frames */}
    <g fill="none" stroke="#22d422" strokeWidth="1.200" strokeDasharray="8 2 1 2">
      <path d="M748 340H702.500V403H755" />
      <path d="M756 349H711.500V394H755" />
      <path d="M702.500 594V655H1213V598M702.500 594H974" />
      <path d="M711.500 602V647H1204V598M711.500 602H974" />
    </g>
    {/* yellow and purple bars */}
    <path d="M913 373.500H1044M697 510.500H802M1155 549.500H1257" stroke="#f5f000" strokeWidth="3" />
    <path d="M1059.500 533V661" stroke="#f5f000" strokeWidth="3" />
    <path d="M913 410.500H1044M697 532H802M1155 532H1257" stroke="#a010e0" />
    <path d="M1022 533V661" stroke="#8a20d0" strokeWidth="1.500" />
    <g fill="none" stroke="#aab0f0">
      <circle cx="928.500" cy="410.500" r="2.500" />
      <circle cx="787.500" cy="532" r="2.500" />
      <circle cx="1170.500" cy="532" r="2.500" />
      <circle cx="1022" cy="622.500" r="2.500" />
    </g>
    <path d="M913 622.500H1022" stroke="#d8d8d8" />
    <path d="M1022 622.500H1044" stroke="#aab0f0" />
    <path d="M913 616V640" stroke="#d8d8d8" />
    <path d="M1044 616V640" stroke="#aab0f0" />
    {/* columns */}
    <Column x={747} y={279} top />
    <Column x={969} y={279} top />
    <Column x={1197} y={279} top />
    <Column x={747} y={586} />
    <Column x={969} y={586} />
    <Column x={1197} y={586} />
    {/* dimensions */}
    <g stroke="#00d800" fill="none">
      <path d="M668.500 222V409M661 222H690M668.500 291H697M661 409H690" />
      <path d="M668.500 518V661M661 518H690M661 649H690M668 661H690" />
      <path d="M697 437.500H750" />
      <path d="M1207 410.500H1258" />
      <path d="M847.500 165V203" />
      <path d="M751 689.500H802M913 689.500H1044M1155 689.500H1257M700 689.500H751" />
      <path d="M751 668V697M802 668V697M979 668V697M1206 668V697M1257 668V697" />
      <path d="M913 668V697M1044 668V697M1155 668V697" stroke="#0a9a0a" strokeWidth="1.500" />
      <path d="M1354.500 527V669M1347 527H1360M1347 669H1360" />
    </g>
    <path d="M913 439.500H1044" stroke="#108a50" strokeWidth="1.500" />
    <path d="M913 418V446M1044 418V446" stroke="#0a9a0a" />
    <g stroke="#008f00" fill="none" strokeWidth="1.500">
      <path d="M1286 199V382M1265 199H1293M1265 291H1293M1265 382H1293" />
      <path d="M1286 479V661M1265 479H1293M1265 649H1293M1265 661H1293" />
    </g>
    <path d="M1048.500 533V598M1030 533H1055M1030 598H1055" stroke="#159a40" />
    {[[668, 222], [668, 291], [668, 409], [668, 518], [668, 649], [668, 661], [1286, 199], [1286, 291], [1286, 382], [1286, 479], [1286, 649], [1286, 661], [751, 690], [802, 690], [913, 690], [979, 690], [1044, 690], [1155, 690], [1206, 690], [1257, 690], [697, 438], [722, 438], [750, 438], [913, 439], [979, 439], [1044, 439], [1207, 411], [1237, 411], [1257, 411], [847, 203]].map(([x, y]) => (
      <Tick key={`${x}-${y}`} x={x} y={y} />
    ))}
    {/* dimension text */}
    <Tx x={664} y={261} s="2400" l={16} r />
    <Tx x={664} y={354} s="4150" l={16} r />
    <Tx x={664} y={580} s="4600" l={16} r />
    <Tx x={664} y={663} s="400" l={12} r />
    <Tx x={694} y={450} s="10800" l={47} f={20} r />
    <Tx x={694} y={732} s="0" l={9} f={20} r />
    <Tx x={844} y={185} s="1500" l={15} f={10} r />
    <Tx x={706} y={434} s="900" l={12} c="#c9cdf5" />
    <Tx x={733} y={434} s="1000" l={15} c="#c9cdf5" />
    <Tx x={942} y={436} s="2300" l={17} c="#c9cdf5" />
    <Tx x={1015} y={436} s="2300" l={17} c="#c9cdf5" />
    <Tx x={1218} y={407} s="1100" l={14} c="#c9cdf5" />
    <Tx x={1244} y={407} s="700" l={12} c="#c9cdf5" />
    <Tx x={1281} y={249} s="3200" l={16} r />
    <Tx x={1281} y={340} s="3200" l={16} r />
    <Tx x={1281} y={568} s="6000" l={16} r />
    <Tx x={1281} y={674} s="400" l={12} r />
    <Tx x={1349} y={567} s="2500" l={16} r />
    <Tx x={1349} y={638} s="2500" l={16} r />
    <Tx x={720} y={685} s="1900" l={15} />
    <Tx x={773} y={685} s="1800" l={15} />
    <Tx x={942} y={685} s="2300" l={16} />
    <Tx x={1015} y={685} s="2300" l={16} />
    <Tx x={1176} y={685} s="1800" l={15} />
    <Tx x={1228} y={685} s="1800" l={15} />
    <Tx x={1045} y={569} s="2300" l={14} f={9} c="#b0b5ee" r />
    {/* rebar labels */}
    <Tx x={1060} y={188} s="WKMC(底板标高-5.600)" l={53} f={11} c="#00e0ff" />
    <Tx x={1009} y={405} s="WKC16" l={20} f={11} c="#19a8ff" />
    <Tx x={776} y={526} s="WKC14" l={20} f={11} c="#19a8ff" />
    <Tx x={1230} y={526} s="WKC16" l={20} f={11} c="#19a8ff" />
    <Tx x={1016} y={568} s="WKC16" l={20} f={11} c="#19a8ff" r />
    {/* axis bubbles */}
    <Hex x={750} y={178} s="1-1" />
    <Hex x={979} y={178} s="1-2" />
    <Hex x={1206} y={178} s="1-3" />
    <Hex x={750} y={726} s="1-1" />
    <Hex x={979} y={726} s="1-2" />
    <Hex x={1206} y={726} s="1-3" />
    <Hex x={656} y={291} s="1-K" />
    <Hex x={656} y={598} s="1-J" />
    <Hex x={1354} y={598} s="1-J" />
    {/* origin marker */}
    <path d="M692.500 682V668" stroke="#00e000" strokeWidth="4" />
    <path d="M692.500 659l5 9h-10z" fill="#00e000" />
    <path d="M698 687.500H714" stroke="#f00000" strokeWidth="4" />
    <path d="M723 687.500l-9 -5v10z" fill="#f00000" />
    <circle cx="692.500" cy="687.500" r="5.500" fill="#0808b0" />
    <Tx x={692} y={655} s="Y" l={8} f={12} c="#00e000" />
    <Tx x={729} y={693} s="X" l={9} f={14} c="#f00000" />
  </svg>
);

const viewCaret = <span className="my-[3px]"><Caret color="#4a5260" /></span>;

const ViewTools = () => (
  <div className="absolute right-0 top-px flex h-[227px] w-[33px] flex-col items-center rounded-l-[3px] bg-[#b3b5b8] pt-[9px]">
    <Svg size={26} box={26}>
      <defs>
        <radialGradient id="ball" cx=".4" cy=".3" r=".8">
          <stop offset="0" stopColor="#f4f6f8" />
          <stop offset="1" stopColor="#7f8b98" />
        </radialGradient>
      </defs>
      <ellipse cx="12" cy="13" rx="9" ry="9" fill="url(#ball)" />
      <circle cx="20" cy="7" r="4" fill="url(#ball)" stroke="#7b8794" strokeWidth=".5" />
      <path d="M2 21c6 1 14-1 19-8" stroke="#3d4650" />
      <circle cx="2.500" cy="20.500" r="1.500" fill="#3d4650" />
    </Svg>
    <span className="mt-[5px]">
      <Svg size={24} box={24}><path d="M1 6l5-4h17v16l-5 4H1z" fill="#7d8ba0" stroke="#3d4650" /><path d="M1 6h17v16M18 6l5-4" stroke="#3d4650" /><text x="6" y="19" fontSize="7" fill="#222" fontFamily="Liberation Sans">3D</text></Svg>
    </span>
    <span className="mt-[6px]">
      <Svg size={24} box={24}><path d="M1 6l5-4h17v16l-5 4H1z" fill="#d1e6fb" stroke="#3d4650" /><path d="M1 6h17v16M18 6l5-4M6 2v15H1M6 17h17" stroke="#3d4650" /></Svg>
    </span>
    {viewCaret}
    <span className="mt-[4px]">
      <Svg size={24} box={24}><path d="M1 6l5-4h17v16l-5 4H1z" fill="#7d8ba0" stroke="#3d4650" /><path d="M1 6h17v16M18 6l5-4" stroke="#3d4650" /></Svg>
    </span>
    {viewCaret}
    <span className="mt-[6px]">
      <Svg size={24} box={24}><path d="M21 9a10 10 0 1 0 1 6" stroke="#4a5260" strokeWidth="2" /><path d="M23 3v7h-7z" fill="#4a5260" /></Svg>
    </span>
    {viewCaret}
    <span className="mb-[4px] mt-[2px] h-px w-[23px] bg-[#8b8d90]" />
    <Svg size={24} box={24}>
      <rect x="1" y="2" width="22" height="20" fill="#7d8ba0" stroke="#3d4650" />
      <path d="M3 6h18M12 6v15" stroke="#3d4650" />
      <path d="M4 9h2v2H4zM4 13h2v2H4zM4 17h2v2H4zM14 9h2v2h-2zM14 13h2v2h-2zM14 17h2v2h-2z" stroke="#20262c" strokeWidth=".8" />
      <path d="M8 10h2M8 14h2M8 18h2M18 10h2M18 14h2M18 18h2" stroke="#20262c" />
    </Svg>
  </div>
);

const StatusBtn = ({ w, children, active }: { w: string; children: ReactNode; active?: boolean }) => (
  <div className={`flex h-[25px] ${w} items-center justify-center gap-[4px] border-2 text-[12px] text-[#333] ${active ? 'border-[#4fa3ee] bg-white' : 'border-[#a9aaac] bg-[#cfd0d3]'}`}>
    {children}
  </div>
);

const StatusBar = () => (
  <div className="flex h-[28px] items-center bg-[#dcdde0] pl-[2px] text-[12px] text-[#333]">
    <span className="w-[263px] whitespace-nowrap text-[13px]">X = 18132 Y = 73592</span>
    <span className="w-[83px] whitespace-nowrap tracking-[0.4px]">层高：1.6</span>
    <span className="w-[134px] whitespace-nowrap tracking-[0.6px]">标高：-6.2~-4.6</span>
    <span className="w-[102px]">0</span>
    <span className="w-[103px] whitespace-nowrap">隐藏：0</span>
    <div className="flex items-center gap-[3px]">
      <StatusBtn w="w-[25px]">
        <Svg size={14}><path d="M2 1v12h12" stroke="#444" /><path d="M2 8h5v5" stroke="#444" /></Svg>
      </StatusBtn>
      <StatusBtn w="w-[36px]" active>
        <Svg size={14}><rect x="1.500" y="2" width="11" height="12" stroke="#4a90d9" /><rect x="0" y="0" width="4" height="4" fill={O} /></Svg>
        <Caret />
      </StatusBtn>
      <span className="ml-[3px]">
        <StatusBtn w="w-[25px]">
          <Svg size={16}><path d="M1 1l14 14M15 1L1 15" stroke="#999" /></Svg>
        </StatusBtn>
      </span>
      <span className="ml-[3px]">
        <StatusBtn w="w-[36px]">
          <Svg size={14}><path d="M1 13L11 5M1 13h13" stroke="#333" /><path d="M8 8a6 6 0 0 1 2 5" stroke="#333" /></Svg>
          <Caret />
        </StatusBtn>
      </span>
      <StatusBtn w="w-[36px]">
        <Svg size={14}><path d="M4 1v6M1 4h6" stroke="#333" strokeWidth="1.300" /><rect x="5" y="10" width="9" height="3" fill="#333" /></Svg>
        <Caret />
      </StatusBtn>
      <span className="ml-px"><StatusBtn w="w-[71px]">跨图层选择</StatusBtn></span>
      <span className="ml-[1px]"><StatusBtn w="w-[61px]">折线选择</StatusBtn></span>
    </div>
    <span className="ml-[6px] w-[183px] whitespace-nowrap">按右键终止或ESC取消</span>
    <span className="whitespace-nowrap">7.35294 FPS</span>
  </div>
);

// taskbar
const AppBox = ({ bg, children }: { bg: string; children?: ReactNode }) => (
  <div className={`flex h-[16px] w-[16px] items-center justify-center overflow-hidden rounded-[2px] text-[9px] leading-none text-white ${bg}`}>{children}</div>
);

const Penguin = ({ scarf, size = 16 }: { scarf: string; size?: number }) => (
  <Svg size={size}>
    <ellipse cx="8" cy="9" rx="5.500" ry="6.500" fill="#111" />
    <ellipse cx="8" cy="11" rx="4" ry="4" fill="#fff" />
    <circle cx="6.500" cy="4.500" r="1" fill="#fff" />
    <circle cx="9.500" cy="4.500" r="1" fill="#fff" />
    <path d="M3 8h10l-1 2H4zM9 9l3 3 1-2z" fill={scarf} />
    <path d="M4 15h3M9 15h3" stroke="#f4b000" strokeWidth="1.500" />
  </Svg>
);

const WeChat = () => (
  <Svg size={17}>
    <ellipse cx="6.500" cy="6.500" rx="6" ry="5" fill="#5ec83a" />
    <ellipse cx="11.500" cy="10" rx="4.500" ry="3.800" fill="#e8e8e8" />
    <path d="M3 10l-1 3 4-2z" fill="#5ec83a" />
  </Svg>
);

const trayApps: ReactNode[] = [
  <Svg size={16}><path d="M1 3.500l6.500-1v5H1zM8.500 2.300L15 1.500v6H8.500zM1 8.500h6.500v5L1 12.500zM8.500 8.500H15v6l-6.500-1z" fill="#fff" /></Svg>,
  <AppBox bg="bg-[#001d34] border border-[#2fa8f5]"><span className="text-[#4fc3f7]">Ps</span></AppBox>,
  <AppBox bg="bg-[#2e1300] border border-[#f08a24]"><span className="text-[#f8a13a]">Ai</span></AppBox>,
  <AppBox bg="bg-gradient-to-b from-[#37b7ae] to-[#0f8e8a]"><Svg size={12}><path d="M1 1h5l5 5-5 5H1l3-5z" fill="#0b5f66" /></Svg></AppBox>,
  <Svg size={16}><path d="M1 1h14v1.500H9V6H7V2.500H1z" fill="#eee" /><path d="M3 4h10v1.500H9" stroke="#ddd" /><rect x="6" y="5" width="4" height="5" fill="#ddd" /><path d="M2 15l3-4 2 4z" fill="#d33" /><rect x="9" y="11" width="5" height="4" fill="#3b88c3" /></Svg>,
  <div className="flex h-[16px] w-[16px] items-center justify-center rounded-full bg-[#4d8fd8] text-[9px] text-white">qb</div>,
  <div className="flex h-[16px] w-[16px] items-center justify-center rounded-[3px] bg-[#1483f0]"><span className="flex h-[12px] w-[12px] items-center justify-center rounded-full border-[1.5px] border-white text-[8px] font-bold leading-none text-white">K</span></div>,
  <AppBox bg="bg-white"><Svg size={14}><path d="M0 2l7 4 7-5-2 6-4 6-2-4z" fill="#4a5ed8" /><path d="M0 2l6 8 2-4z" fill="#6c3fc8" /></Svg></AppBox>,
  <AppBox bg="bg-white"><Svg size={14}><circle cx="7" cy="4.500" r="3" stroke="#3fa9f5" strokeWidth="1.300" /><circle cx="4" cy="9.500" r="3" stroke="#f06a9b" strokeWidth="1.300" /><circle cx="10" cy="9.500" r="3" stroke="#3fc1e8" strokeWidth="1.300" /></Svg></AppBox>,
  <Svg size={16}><rect x="0" y="2" width="16" height="10" fill="#fff" stroke="#1178d8" strokeWidth="1.500" /><rect x="5" y="13" width="6" height="2" fill="#1178d8" /><circle cx="8" cy="7" r="2.500" fill="#1178d8" /><circle cx="8" cy="7" r="1" fill="#fff" /></Svg>,
  <Penguin scarf="#e02020" />,
  <WeChat />,
  <Svg size={17}><circle cx="8" cy="8" r="6.500" stroke="#1d8ae8" strokeWidth="3" /><path d="M8 13c2-4 5-4 8-1v3H8z" fill="#dff1ff" /></Svg>,
  <div className="flex h-[16px] w-[16px] items-center justify-center border border-[#8a8a8a] bg-[#1c4f98] text-[9px] font-bold leading-none text-white">网</div>,
  <AppBox bg="bg-[#2d8ff0]"><Svg size={12}><path d="M1 1h10v3H7.500v7h-3V4H1z" fill="#fff" /></Svg></AppBox>,
  <Svg size={17}><path d="M1 3h5l2 2h8v9H1z" fill="#f6cf5f" /><rect x="1" y="6" width="15" height="8" fill="#fbe08a" /><rect x="5" y="10" width="7" height="4" fill="#2d8fe0" /><rect x="7" y="12" width="3" height="2" fill="#fbe08a" /></Svg>,
];

const Taskbar = () => (
  <div className="flex h-[768px] w-[93px] shrink-0 flex-col bg-[#75777a] font-['Noto_Sans','Noto_Sans_CJK_SC',sans-serif] text-white">
    <div className="relative">
      {trayApps.map((a, i) => (
        <div key={i} className={`flex h-[31.2px] items-center justify-center ${i === 14 ? 'bg-[#6d6f72]' : ''} ${i >= 12 ? 'border-l-2 border-[#a4a6a8] pr-[2px]' : ''}`}>
          {a}
        </div>
      ))}
    </div>
    <div className="flex h-[60px] shrink-0 items-end justify-end pr-[10px]"><ChevronRight size={18} strokeWidth={1.500} /></div>
    <div className="mt-[5px] flex items-center pl-[18px]">
      <Penguin scarf="#ee2a9a" size={17} />
      <span className="ml-[7px]"><WeChat /></span>
      <span className="ml-[8px]"><Svg size={13}><path d="M1 13a11 11 0 0 1 11-11M4 13a8 8 0 0 1 8-8M7 13a5 5 0 0 1 5-5" stroke="#ddd" /><circle cx="11" cy="12" r="1.500" fill="#fff" /></Svg></span>
    </div>
    <div className="mt-[11px] flex items-center pl-[20px]">
      <Svg size={13}><path d="M1 5h2l4-4v12L3 9H1z" stroke="#fff" /></Svg>
      <CloseIcon size={8} strokeWidth={2} className="ml-[1px]" />
    </div>
    <div className="mt-[13px] flex items-center pl-[22px]">
      <span className="text-[13px] leading-none">中</span>
      <span className="ml-[14px] flex h-[15px] w-[15px] items-center justify-center rounded-[3px] bg-[#e8431f] text-[12px] font-bold leading-none">S</span>
    </div>
    <div className="mt-[22px] flex flex-col items-center text-[12px] leading-[19px] text-[#eee]">
      <span>8:55</span>
      <span>星期二</span>
      <span>2020-07-14</span>
    </div>
    <div className="mt-[19px] flex justify-center">
      <Svg size={16}><path d="M1 2h14v10H10l-2 2-2-2H1z" fill="#fff" /><path d="M4 5h8M4 7.500h8M4 10h5" stroke="#75777a" /></Svg>
    </div>
  </div>
);

export default function App() {
  return (
    <div className="flex h-[768px] w-[1366px] overflow-hidden bg-white font-['Noto_Sans','Noto_Sans_CJK_SC',sans-serif]">
      <Taskbar />
      <div className="flex min-w-0 flex-1 flex-col">
        <Header />
        <Ribbon />
        <SelectorBar />
        <div className="flex h-[575px]">
          <NavPanel />
          <div className="w-[4px] shrink-0 bg-white" />
          <div className="flex w-[331px] shrink-0 flex-col">
            <ListPanel />
            <PropPanel />
          </div>
          <div className="w-[4px] shrink-0 bg-white pt-[237px]">
            <div className="h-[100px] bg-[#6d6f72]" />
          </div>
          <div className="relative flex-1">
            <DrawingCanvas />
            <ViewTools />
          </div>
        </div>
        <StatusBar />
      </div>
    </div>
  );
}
